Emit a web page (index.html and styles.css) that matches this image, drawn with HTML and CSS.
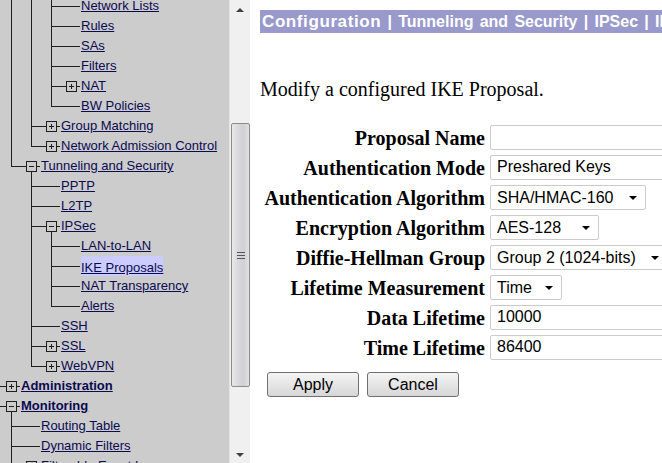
FILE: index.html
```html
<!DOCTYPE html>
<html lang="en">
<head>
  <meta charset="UTF-8">
  <meta name="viewport" content="width=device-width, initial-scale=1.0">
  <title>IKE Proposals</title>
  <link rel="stylesheet" href="styles.css">
</head>
<body>
  <div class="tree-pane">
    <div class="tree">
      <div class="row"><i class="g v"></i><i class="g v"></i><i class="g t"></i><i class="n"></i><a href="#">Network Lists</a></div>
      <div class="row"><i class="g v"></i><i class="g v"></i><i class="g t"></i><i class="n"></i><a href="#">Rules</a></div>
      <div class="row"><i class="g v"></i><i class="g v"></i><i class="g t"></i><i class="n"></i><a href="#">SAs</a></div>
      <div class="row"><i class="g v"></i><i class="g v"></i><i class="g t"></i><i class="n"></i><a href="#">Filters</a></div>
      <div class="row"><i class="g v"></i><i class="g v"></i><i class="g t"></i><i class="n"><b class="box plus"></b></i><a href="#">NAT</a></div>
      <div class="row"><i class="g v"></i><i class="g v"></i><i class="g l"></i><i class="n"></i><a href="#">BW Policies</a></div>
      <div class="row"><i class="g v"></i><i class="g t"></i><i class="n"><b class="box plus"></b></i><a href="#">Group Matching</a></div>
      <div class="row"><i class="g v"></i><i class="g l"></i><i class="n"><b class="box plus"></b></i><a href="#">Network Admission Control</a></div>
      <div class="row"><i class="g l"></i><i class="n open"><b class="box"></b></i><a href="#">Tunneling and Security</a></div>
      <div class="row"><i class="g"></i><i class="g t"></i><i class="n"></i><a href="#">PPTP</a></div>
      <div class="row"><i class="g"></i><i class="g t"></i><i class="n"></i><a href="#">L2TP</a></div>
      <div class="row"><i class="g"></i><i class="g t"></i><i class="n open"><b class="box"></b></i><a href="#">IPSec</a></div>
      <div class="row"><i class="g"></i><i class="g v"></i><i class="g t"></i><i class="n"></i><a href="#">LAN-to-LAN</a></div>
      <div class="row"><i class="g"></i><i class="g v"></i><i class="g t"></i><i class="n"></i><a href="#" class="current">IKE Proposals</a></div>
      <div class="row"><i class="g"></i><i class="g v"></i><i class="g t"></i><i class="n"></i><a href="#">NAT Transparency</a></div>
      <div class="row"><i class="g"></i><i class="g v"></i><i class="g l"></i><i class="n"></i><a href="#">Alerts</a></div>
      <div class="row"><i class="g"></i><i class="g t"></i><i class="n"></i><a href="#">SSH</a></div>
      <div class="row"><i class="g"></i><i class="g t"></i><i class="n"><b class="box plus"></b></i><a href="#">SSL</a></div>
      <div class="row"><i class="g"></i><i class="g l"></i><i class="n"><b class="box plus"></b></i><a href="#">WebVPN</a></div>
      <div class="row top"><i class="n"><b class="box plus"></b></i><a href="#">Administration</a></div>
      <div class="row top"><i class="n open"><b class="box"></b></i><a href="#">Monitoring</a></div>
      <div class="row"><i class="g t"></i><i class="n"></i><a href="#">Routing Table</a></div>
      <div class="row"><i class="g t"></i><i class="n"></i><a href="#">Dynamic Filters</a></div>
      <div class="row"><i class="g t"></i><i class="n"><b class="box plus"></b></i><a href="#">Filterable Event Log</a></div>
    </div>
  </div>

  <div class="scrollbar">
    <span class="arrow up"></span>
    <div class="thumb"><span class="grip"></span></div>
    <span class="arrow down"></span>
  </div>

  <div class="content">
    <div class="crumbs"><span class="crumb-root">Configuration</span> | Tunneling and Security | IPSec | IKE Proposals | Modify</div>

    <p class="intro">Modify a configured IKE Proposal.</p>

    <form class="proposal-form">
      <label class="field-label" for="name">Proposal Name</label>
      <input class="field w-wide" id="name" type="text" value="">

      <label class="field-label" for="mode">Authentication Mode</label>
      <input class="field w-wide" id="mode" type="text" value="Preshared Keys" readonly>

      <label class="field-label" for="auth">Authentication Algorithm</label>
      <span class="sel"><select class="field w-auth" id="auth"><option>SHA/HMAC-160</option><option>MD5/HMAC-128</option></select></span>

      <label class="field-label" for="enc">Encryption Algorithm</label>
      <span class="sel"><select class="field w-enc" id="enc"><option>AES-128</option><option>DES-56</option><option>3DES-168</option><option>AES-192</option><option>AES-256</option></select></span>

      <label class="field-label" for="dh">Diffie-Hellman Group</label>
      <span class="sel"><select class="field w-dh" id="dh"><option>Group 2 (1024-bits)</option><option>Group 1 (768-bits)</option><option>Group 5 (1536-bits)</option></select></span>

      <label class="field-label" for="measure">Lifetime Measurement</label>
      <span class="sel"><select class="field w-time" id="measure"><option>Time</option><option>Data</option><option>Both</option><option>None</option></select></span>

      <label class="field-label" for="data">Data Lifetime</label>
      <input class="field w-wide" id="data" type="text" value="10000">

      <label class="field-label" for="time">Time Lifetime</label>
      <input class="field w-wide" id="time" type="text" value="86400">
    </form>

    <div class="actions">
      <button class="btn" type="button">Apply</button>
      <button class="btn" type="button">Cancel</button>
    </div>
  </div>
</body>
</html>
```

FILE: styles.css
```css
html, body {
  margin: 0;
  height: 100%;
  overflow: hidden;
}
body {
  display: flex;
  background: #ffffff;
}

/* left frame: navigation tree */
.tree-pane {
  width: 229px;
  flex: none;
  background: #cccccc;
  overflow: hidden;
}
.tree {
  margin-top: -4px;
  font-family: Arial, "Liberation Sans", sans-serif;
  font-size: 13px;
}
.row {
  display: flex;
  height: 20px;
  line-height: 20px;
  white-space: nowrap;
}
.row a {
  color: #0a0a50;
  margin-left: 1px;
}
.row.top a {
  font-weight: bold;
}
.row a.current {
  background: #ccccff;
  padding: 2px 0;
}
.g, .n {
  position: relative;
  width: 20px;
  height: 20px;
  flex: none;
  font-style: normal;
}
.g.v::before, .g.t::before, .g.l::before {
  content: '';
  position: absolute;
  left: 11px;
  top: 0;
  bottom: 0;
  border-left: 1px solid #1e1e1e;
}
.g.l::before {
  bottom: 9px;
}
.g.t::after, .g.l::after, .n::before {
  content: '';
  position: absolute;
  left: 11px;
  right: 0;
  top: 10px;
  border-top: 1px solid #1e1e1e;
}
.n::before {
  left: 0;
}
.n.open::after {
  content: '';
  position: absolute;
  left: 11px;
  top: 16px;
  bottom: 0;
  border-left: 1px solid #1e1e1e;
}
.box {
  position: absolute;
  left: 6px;
  top: 5px;
  width: 11px;
  height: 11px;
  box-sizing: border-box;
  border: 1px solid #1e1e1e;
  background: #cccccc;
}
.box::before {
  content: '';
  position: absolute;
  left: 2px;
  top: 4px;
  width: 5px;
  border-top: 1px solid #1e1e1e;
}
.box.plus::after {
  content: '';
  position: absolute;
  left: 4px;
  top: 2px;
  height: 5px;
  border-left: 1px solid #1e1e1e;
}

/* scrollbar of the tree frame */
.scrollbar {
  width: 20px;
  flex: none;
  display: flex;
  flex-direction: column;
  align-items: center;
  background: #f0f0f0;
  border-left: 1px solid #e4e4e4;
}
.arrow {
  width: 0;
  height: 0;
  border-left: 4px solid transparent;
  border-right: 4px solid transparent;
}
.arrow.up {
  margin-top: 8px;
  border-bottom: 4px solid #404040;
}
.arrow.down {
  margin-top: 66px;
  border-top: 4px solid #404040;
}
.thumb {
  width: 19px;
  height: 264px;
  margin-top: 111px;
  margin-left: 1px;
  box-sizing: border-box;
  border: 1px solid #8c8c8c;
  border-radius: 2px;
  background: linear-gradient(to right, #e9e9e9, #d6d6de 40%, #d0d0d6 70%, #e2e2e2);
  display: flex;
  align-items: center;
  justify-content: center;
}
.grip {
  width: 8px;
  height: 7px;
  background: repeating-linear-gradient(to bottom, #555 0 1px, transparent 1px 3px);
}

/* right frame: the form */
.content {
  flex: 1;
  min-width: 0;
  overflow: hidden;
  padding: 10px 0 0 10px;
}
.crumbs {
  background: #9999cc;
  color: #ffffff;
  font-family: Arial, "Liberation Sans", sans-serif;
  font-size: 16px;
  font-weight: bold;
  word-spacing: 1.8px;
  line-height: 23px;
  padding-left: 2px;
  white-space: nowrap;
}
.crumb-root {
  font-size: 17px;
  letter-spacing: 0.6px;
}
.intro {
  font-family: "Times New Roman", "Liberation Serif", serif;
  font-size: 20px;
  margin: 45px 0 0;
}
.proposal-form {
  display: grid;
  grid-template-columns: 225px auto;
  grid-auto-rows: 30px;
  column-gap: 5px;
  align-items: center;
  margin-top: 21px;
}
.field-label {
  justify-self: end;
  font-family: "Times New Roman", "Liberation Serif", serif;
  font-size: 20px;
  font-weight: bold;
  color: #000000;
  padding-top: 2px;
}
.field {
  box-sizing: border-box;
  height: 25px;
  border: 1px solid #cbcbcb;
  border-radius: 2px;
  background: #ffffff;
  padding: 0 6px;
  font-family: Arial, "Liberation Sans", sans-serif;
  font-size: 16px;
  color: #000000;
  outline: none;
}
select.field {
  appearance: none;
  -webkit-appearance: none;
  padding-right: 20px;
}
.sel {
  position: relative;
  justify-self: start;
  display: flex;
}
.sel::after {
  content: '';
  position: absolute;
  right: 9px;
  top: 11px;
  border-left: 4px solid transparent;
  border-right: 4px solid transparent;
  border-top: 4px solid #000000;
  pointer-events: none;
}
.w-wide { width: 200px; }
.w-auth { width: 156px; }
.w-enc { width: 109px; }
.w-dh { width: 178px; }
.w-time { width: 72px; }

.actions {
  display: flex;
  gap: 8px;
  margin: 10px 0 0 7px;
}
.btn {
  width: 92px;
  height: 25px;
  border: 1px solid #707070;
  border-radius: 3px;
  background: linear-gradient(to bottom, #f4f4f4, #e6e6e6 50%, #d6d6d6);
  font-family: Arial, "Liberation Sans", sans-serif;
  font-size: 16px;
  color: #000000;
  padding: 0;
}
```
